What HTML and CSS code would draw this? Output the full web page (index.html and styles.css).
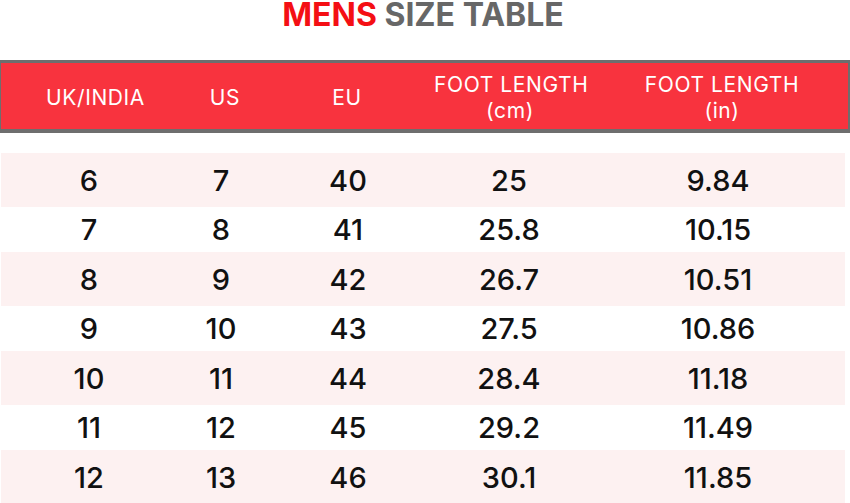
FILE: index.html
```html
<!DOCTYPE html>
<html lang="en">
<head>
<meta charset="utf-8">
<title>Mens Size Table</title>
<link rel="stylesheet" href="styles.css">
</head>
<body>
<h1 class="title"><span class="title-red">MENS</span> SIZE TABLE</h1>
<div class="head">
  <div class="hcell">UK/INDIA</div>
  <div class="hcell">US</div>
  <div class="hcell">EU</div>
  <div class="hcell">FOOT LENGTH<br>(cm)</div>
  <div class="hcell hlast">FOOT LENGTH<br>(in)</div>
</div>
<div class="rows">
  <div class="row"><div>6</div><div>7</div><div>40</div><div>25</div><div class="last">9.84</div></div>
  <div class="row"><div>7</div><div>8</div><div>41</div><div>25.8</div><div class="last">10.15</div></div>
  <div class="row"><div>8</div><div>9</div><div>42</div><div>26.7</div><div class="last">10.51</div></div>
  <div class="row"><div>9</div><div>10</div><div>43</div><div>27.5</div><div class="last">10.86</div></div>
  <div class="row"><div>10</div><div>11</div><div>44</div><div>28.4</div><div class="last">11.18</div></div>
  <div class="row"><div>11</div><div>12</div><div>45</div><div>29.2</div><div class="last">11.49</div></div>
  <div class="row"><div>12</div><div>13</div><div>46</div><div>30.1</div><div class="last">11.85</div></div>
</div>
</body>
</html>
```
FILE: styles.css
```css
html, body {
  margin: 0;
  padding: 0;
  background: #ffffff;
  font-family: "Inter", "Liberation Sans", sans-serif;
  overflow: hidden;
}

.title {
  margin: 0 0 30px 0;
  font-size: 32px;
  line-height: 30px;
  font-weight: 700;
  text-align: center;
  color: #676767;
  padding-right: 4px;
}

.title-red {
  color: #f40f14;
}

.head {
  display: grid;
  grid-template-columns: 189px 70px 174px 152px 1fr;
  align-items: center;
  height: 66px;
  background: #f8333e;
  border-style: solid;
  border-color: #6e6e6e;
  border-width: 3px 2px 4px 1px;
  color: #ffffff;
  font-size: 21px;
  line-height: 26px;
  font-weight: 400;
  letter-spacing: 0.6px;
}

.hcell {
  text-align: center;
  white-space: nowrap;
  padding-top: 3px;
}

.hlast {
  padding-left: 10px;
}

.rows {
  margin: 20px 5px 0 1px;
}

.row {
  display: grid;
  grid-template-columns: 176px 88px 166px 156px 1fr;
  align-items: center;
  height: 45px;
  font-size: 29px;
  font-weight: 500;
  color: #111111;
}

.row:nth-child(odd) {
  height: 54px;
  background: #fdf1f1;
}

.row > div {
  text-align: center;
}

.row > .last {
  padding-left: 4px;
}
```
